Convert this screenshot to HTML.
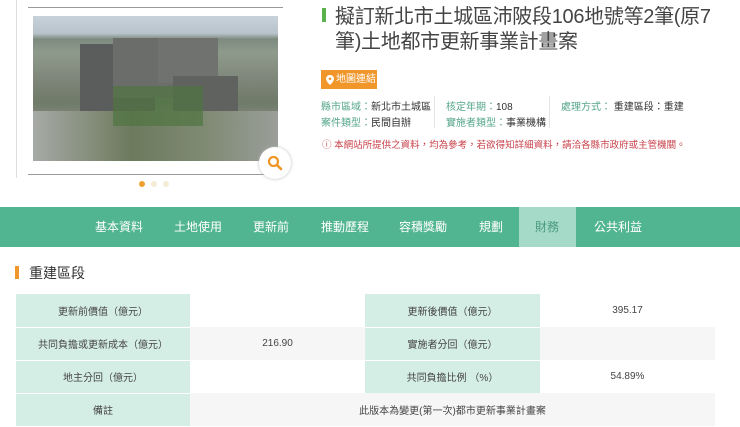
<!DOCTYPE html>
<html><head><meta charset="utf-8"><style>
*{margin:0;padding:0;box-sizing:border-box}
body{width:740px;height:427px;overflow:hidden;background:#fff;font-family:"Liberation Sans","Noto Sans CJK TC",sans-serif;color:#333;position:relative}
.abs{position:absolute}
.photo{left:33px;top:16px;width:245px;height:145px;background:
linear-gradient(180deg,#c9d2da 0%,#b7c2ca 12%,#7d8a7e 16%,#8e9a8c 25%,#7d8579 45%,#6f7a68 60%,#8a8f86 75%,#9aa09a 100%);overflow:hidden}
.nav{left:0;top:207px;width:740px;height:40px;background:#52b592}
.nav span{position:absolute;top:0;height:40px;line-height:40px;color:#fff;font-size:12px}
td{font-size:10px;text-align:center;height:33px;color:#444;vertical-align:middle}
.l{background:#d5eee5}
.v{background:#f6f6f6}
.w{background:#fff}
.inf{font-size:10px;color:#333}
.inf b{font-weight:normal;color:#55a58a}
</style></head><body>
<div class="abs" style="left:16px;top:0;width:1px;height:178px;background:#ddd"></div>
<div class="abs" style="left:28px;top:7px;width:255px;height:1px;background:#999"></div>
<div class="abs" style="left:28px;top:174px;width:255px;height:1px;background:#999"></div>
<div class="abs photo">
 <div class="abs" style="left:47px;top:28px;width:75px;height:70px;background:#5a5d5c"></div>
 <div class="abs" style="left:80px;top:22px;width:75px;height:60px;background:#6b6d6a"></div>
 <div class="abs" style="left:125px;top:22px;width:60px;height:45px;background:#70726f"></div>
 <div class="abs" style="left:140px;top:60px;width:65px;height:45px;background:#5f625f"></div>
 <div class="abs" style="left:0;top:95px;width:245px;height:50px;background:linear-gradient(90deg,#a7aaa6,#6d7a5d 40%,#7f8a73 70%,#9a9e98)"></div>
 <div class="abs" style="left:80px;top:70px;width:90px;height:40px;background:#4e7540;opacity:.7"></div>
</div>
<div class="abs" style="left:259px;top:147px;width:32px;height:32px;border-radius:50%;background:#fff;box-shadow:0 0 3px #bbb"></div>
<svg class="abs" style="left:266px;top:154px" width="18" height="18" viewBox="0 0 18 18"><circle cx="7.5" cy="7.5" r="4.5" fill="none" stroke="#f0962a" stroke-width="2.2"/><line x1="11" y1="11" x2="15" y2="15" stroke="#f0962a" stroke-width="2.6" stroke-linecap="round"/></svg>
<div class="abs" style="left:139px;top:181px;width:6px;height:6px;border-radius:50%;background:#f0a030"></div>
<div class="abs" style="left:151px;top:181px;width:6px;height:6px;border-radius:50%;background:#f3ecd3"></div>
<div class="abs" style="left:163px;top:181px;width:6px;height:6px;border-radius:50%;background:#f3ecd3"></div>

<div class="abs" style="left:322px;top:8px;width:4px;height:14px;background:#5bb14b"></div>
<div class="abs" style="left:335px;top:5px;width:385px;font-size:20px;letter-spacing:-0.3px;line-height:25px;color:#444;word-break:break-all">擬訂新北市土城區沛陂段106地號等2筆(原7<br>筆)土地都市更新事業計畫案</div>
<div class="abs" style="left:321px;top:70px;width:56px;height:19px;background:#f0962a;color:#fff;font-size:10px;line-height:19px;padding-left:15px">地圖連結</div>
<svg class="abs" style="left:326px;top:75px" width="8" height="10" viewBox="0 0 8 10"><path d="M4 0C1.8 0 0 1.7 0 3.8 0 6.5 4 10 4 10s4-3.5 4-6.2C8 1.7 6.2 0 4 0z" fill="#fff"/><circle cx="4" cy="3.8" r="1.3" fill="#f0962a"/></svg>
<div class="abs inf" style="left:321px;top:98px"><b>縣市區域：</b>新北市土城區</div>
<div class="abs inf" style="left:321px;top:114px"><b>案件類型：</b>民間自辦</div>
<div class="abs" style="left:434px;top:96px;width:1px;height:32px;background:#e4e4e4"></div>
<div class="abs inf" style="left:446px;top:98px"><b>核定年期：</b>108</div>
<div class="abs inf" style="left:446px;top:114px"><b>實施者類型：</b>事業機構</div>
<div class="abs" style="left:549px;top:96px;width:1px;height:32px;background:#e4e4e4"></div>
<div class="abs inf" style="left:561px;top:98px"><b>處理方式：</b> 重建區段：重建</div>
<div class="abs" style="left:322px;top:137px;font-size:9.5px;color:#c8414a">ⓘ 本網站所提供之資料，均為參考，若欲得知詳細資料，請洽各縣市政府或主管機關。</div>

<div class="abs nav">
<span style="left:95px">基本資料</span><span style="left:174px">土地使用</span><span style="left:253px">更新前</span><span style="left:321px">推動歷程</span><span style="left:399px">容積獎勵</span><span style="left:479px">規劃</span>
<div class="abs" style="left:519px;top:0;width:57px;height:40px;background:#a6dac8"></div>
<span style="left:535px;color:#4a9b7f">財務</span><span style="left:594px">公共利益</span>
</div>

<div class="abs" style="left:15px;top:266px;width:4px;height:13px;background:#f0962a"></div>
<div class="abs" style="left:29px;top:263px;font-size:14px;color:#333">重建區段</div>

<table class="abs" style="left:16px;top:294px;border-collapse:collapse;width:699px">
<tr><td class="l" style="width:174px;border-bottom:1px solid #fff">更新前價值（億元）</td><td class="w" style="width:175px"></td><td class="l" style="width:175px;border-bottom:1px solid #fff">更新後價值（億元）</td><td class="w">395.17</td></tr>
<tr><td class="l" style="border-bottom:1px solid #fff">共同負擔或更新成本（億元）</td><td class="v">216.90</td><td class="l" style="border-bottom:1px solid #fff">實施者分回（億元）</td><td class="v"></td></tr>
<tr><td class="l" style="border-bottom:1px solid #fff">地主分回（億元）</td><td class="w"></td><td class="l">共同負擔比例 （%）</td><td class="w">54.89%</td></tr>
<tr><td class="l">備註</td><td class="v" colspan="3">此版本為變更(第一次)都市更新事業計畫案</td></tr>
</table>
</body></html>
